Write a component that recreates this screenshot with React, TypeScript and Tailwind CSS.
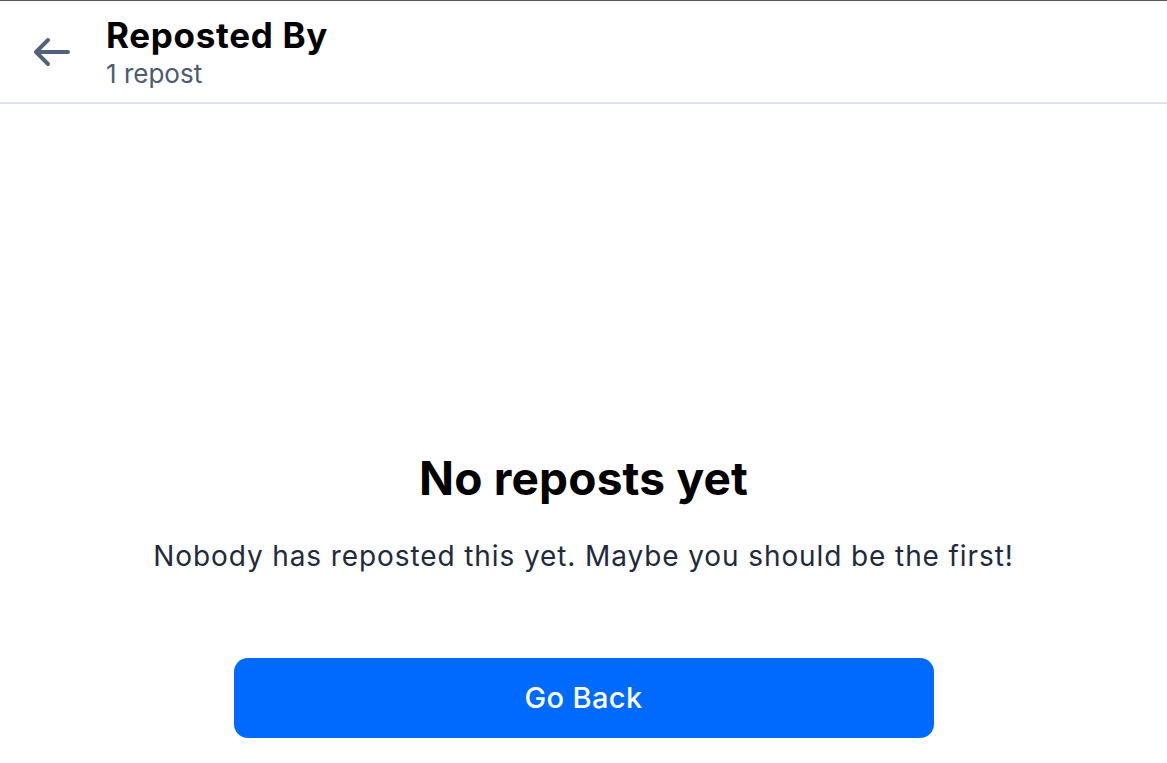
import React from "react";

const BackArrow = () => (
  <svg width="40" height="30" viewBox="0 0 40 30" fill="none">
    <path
      d="M36 15H4M4 15L16 3M4 15L16 27"
      stroke="#53627c"
      strokeWidth="4"
      strokeLinecap="round"
      strokeLinejoin="round"
    />
  </svg>
);

export default function App() {
  return (
    <div
      className="min-h-screen w-full bg-white border-t border-[#555555]"
      style={{ fontFamily: "Inter, 'Noto Sans', sans-serif" }}
    >
      <header className="flex h-[103px] items-center border-b-2 border-[#dde1ea]">
        <button className="ml-[32px] flex h-[40px] w-[40px] items-center justify-start">
          <BackArrow />
        </button>
        <div className="ml-[34px] flex flex-col">
          <h1 className="text-[35px] font-bold leading-[41px] tracking-[0.7px] text-black">
            Reposted By
          </h1>
          <p className="mt-[3px] text-[26px] leading-[30px] text-[#4b5b70]">
            1 repost
          </p>
        </div>
      </header>

      <main className="flex flex-col items-center pt-[347px]">
        <h2 className="text-[46px] font-bold leading-[54px] tracking-[0.2px] text-black">
          No reposts yet
        </h2>
        <p className="mt-[32px] text-[28px] leading-[39px] tracking-[0.9px] text-[#1f2a3c]">
          Nobody has reposted this yet. Maybe you should be the first!
        </p>
        <button className="mt-[82px] flex h-[80px] w-[700px] items-center justify-center rounded-[14px] bg-[#006aff] text-[29px] font-medium tracking-[0.4px] text-white">
          Go Back
        </button>
      </main>
    </div>
  );
}
